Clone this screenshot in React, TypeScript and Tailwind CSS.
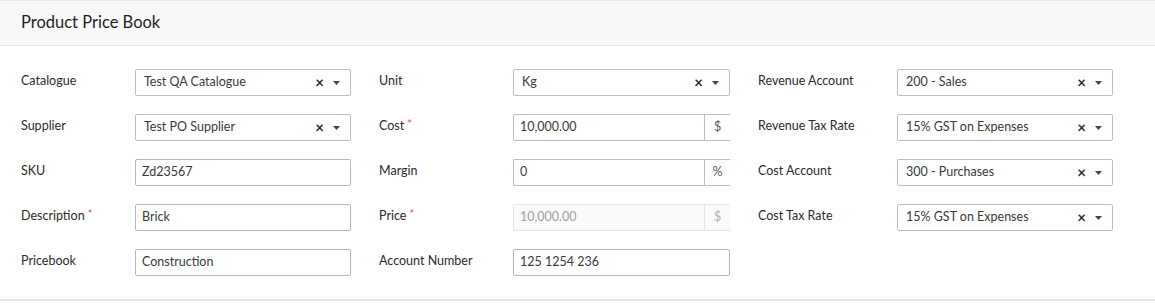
import React from 'react';

type Field =
  | { kind: 'select'; value: string }
  | { kind: 'text'; value: string }
  | { kind: 'addon'; value: string; addon: string; disabled?: boolean };

type Cell = { label: string; required?: boolean; field: Field };

const rows: (Cell | null)[][] = [
  [
    { label: 'Catalogue', field: { kind: 'select', value: 'Test QA Catalogue' } },
    { label: 'Unit', field: { kind: 'select', value: 'Kg' } },
    { label: 'Revenue Account', field: { kind: 'select', value: '200 - Sales' } },
  ],
  [
    { label: 'Supplier', field: { kind: 'select', value: 'Test PO Supplier' } },
    { label: 'Cost', required: true, field: { kind: 'addon', value: '10,000.00', addon: '$' } },
    { label: 'Revenue Tax Rate', field: { kind: 'select', value: '15% GST on Expenses' } },
  ],
  [
    { label: 'SKU', field: { kind: 'text', value: 'Zd23567' } },
    { label: 'Margin', field: { kind: 'addon', value: '0', addon: '%' } },
    { label: 'Cost Account', field: { kind: 'select', value: '300 - Purchases' } },
  ],
  [
    { label: 'Description', required: true, field: { kind: 'text', value: 'Brick' } },
    { label: 'Price', required: true, field: { kind: 'addon', value: '10,000.00', addon: '$', disabled: true } },
    { label: 'Cost Tax Rate', field: { kind: 'select', value: '15% GST on Expenses' } },
  ],
  [
    { label: 'Pricebook', field: { kind: 'text', value: 'Construction' } },
    { label: 'Account Number', field: { kind: 'text', value: '125 1254 236' } },
    null,
  ],
];

function FieldBox({ field }: { field: Field }) {
  if (field.kind === 'select') {
    return (
      <div className="flex h-[27px] items-center rounded-[2px] border border-[#b8c0c8] bg-white pl-[8px] pr-[10px] text-[12.5px] text-[#3a3a3a]">
        <span className="flex-1 truncate">{field.value}</span>
        <span className="mr-[9px] text-[15px] font-bold leading-none text-[#2a2a2a]">×</span>
        <svg width="7" height="4" viewBox="0 0 7 4" className="mt-[1px]">
          <path d="M0 0h7L3.5 4z" fill="#444" />
        </svg>
      </div>
    );
  }
  if (field.kind === 'text') {
    return (
      <div className="flex h-[27px] items-center rounded-[2px] border border-[#b0b9c2] bg-white px-[6px] text-[12.5px] text-[#3a3a3a]">
        {field.value}
      </div>
    );
  }
  const dis = field.disabled;
  return (
    <div
      className={`flex h-[27px] items-stretch rounded-l-[2px] border-y border-l text-[12.5px] ${
        dis ? 'border-[#e2e5e8] bg-[#fafafa] text-[#a0a0a0]' : 'border-[#b8c0c8] bg-white text-[#3a3a3a]'
      }`}
    >
      <div className="flex flex-1 items-center px-[6px]">{field.value}</div>
      <div
        className={`flex w-[26px] items-center justify-center border-l ${
          dis ? 'border-[#e2e5e8] text-[#b0b0b0]' : 'border-[#b8c0c8] text-[#555]'
        }`}
      >
        {field.addon}
      </div>
    </div>
  );
}

function Label({ cell, className }: { cell: Cell; className: string }) {
  return (
    <div className={`flex items-center pb-[2px] text-[12.5px] text-[#2b2b2b] ${className}`}>
      <span>{cell.label}</span>
      {cell.required && <span className="ml-[3px] -mt-[6px] text-[11px] leading-none text-[#e64545]">*</span>}
    </div>
  );
}

export default function App() {
  return (
    <div className="h-[303px] w-[1155px] bg-white" style={{ fontFamily: 'Lato, "Open Sans", sans-serif' }}>
      <div className="h-[301px] border-b-2 border-[#e6e6e6]">
        <div className="flex h-[46px] items-center border-y border-[#e8e8e8] bg-[#f8f8f8] pb-[2px] pl-[21px] text-[16.5px] text-[#1f1f1f]">
          Product Price Book
        </div>
        <div className="flex flex-col gap-[18px] pl-[21px] pt-[23px]">
          {rows.map((row, i) => (
            <div key={i} className="flex h-[27px] items-center">
              {row[0] && (
                <>
                  <Label cell={row[0]} className="w-[114px]" />
                  <div className="w-[216px]">
                    <FieldBox field={row[0].field} />
                  </div>
                </>
              )}
              {row[1] && (
                <>
                  <Label cell={row[1]} className="ml-[28px] w-[134px]" />
                  <div className="w-[217px]">
                    <FieldBox field={row[1].field} />
                  </div>
                </>
              )}
              {row[2] && (
                <>
                  <Label cell={row[2]} className="ml-[28px] w-[139px]" />
                  <div className="w-[216px]">
                    <FieldBox field={row[2].field} />
                  </div>
                </>
              )}
            </div>
          ))}
        </div>
      </div>
    </div>
  );
}
